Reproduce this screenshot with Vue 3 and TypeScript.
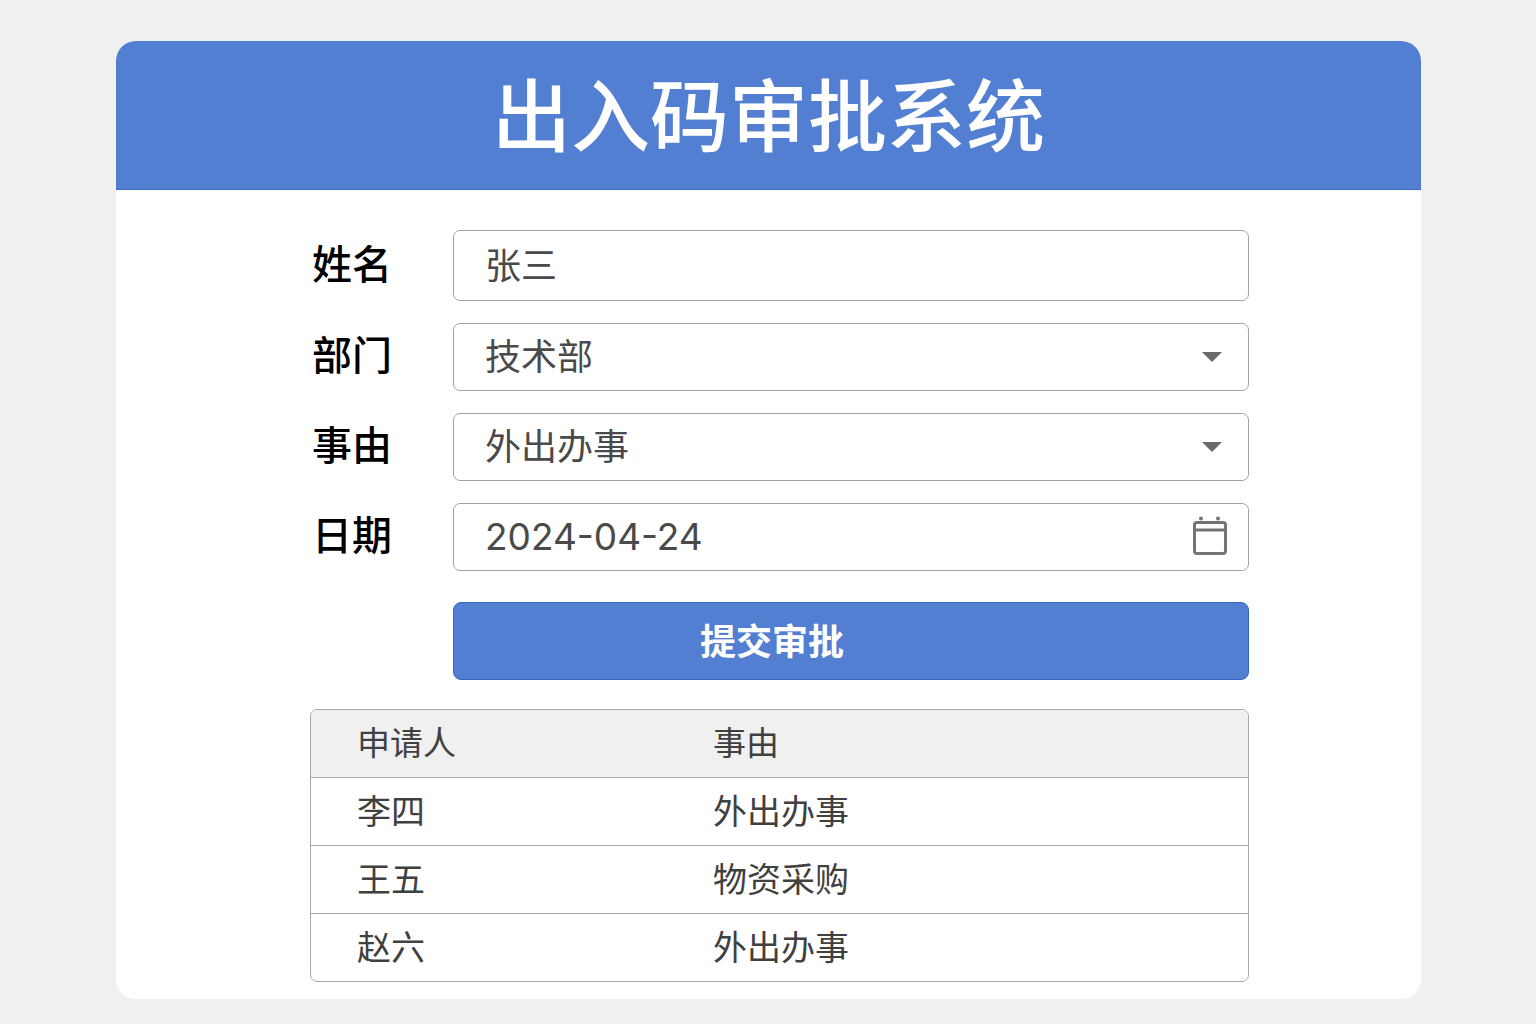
<script setup lang="ts">
import { reactive, ref } from 'vue'

interface Application {
  applicant: string
  reason: string
}

const departments: string[] = ['技术部', '人事部', '财务部']
const reasons: string[] = ['外出办事', '物资采购']

const form = reactive({
  name: '张三',
  department: '技术部',
  reason: '外出办事',
  date: '2024-04-24',
})

const applications = ref<Application[]>([
  { applicant: '李四', reason: '外出办事' },
  { applicant: '王五', reason: '物资采购' },
  { applicant: '赵六', reason: '外出办事' },
])

function submit(): void {
  applications.value.push({ applicant: form.name, reason: form.reason })
}
</script>

<template>
  <div class="page">
    <main class="card">
      <header class="card-header">
        <h1>出入码审批系统</h1>
      </header>
      <div class="card-body">
        <form class="form" @submit.prevent="submit">
          <div class="row">
            <label for="name">姓名</label>
            <div class="field">
              <input id="name" v-model="form.name" class="control tall" type="text" />
            </div>
          </div>
          <div class="row">
            <label for="department">部门</label>
            <div class="field">
              <select id="department" v-model="form.department" class="control">
                <option v-for="d in departments" :key="d">{{ d }}</option>
              </select>
              <svg class="arrow" width="20" height="10" viewBox="0 0 20 10" aria-hidden="true">
                <path d="M0 0H20L10 10Z" fill="#6b6b6b" />
              </svg>
            </div>
          </div>
          <div class="row">
            <label for="reason">事由</label>
            <div class="field">
              <select id="reason" v-model="form.reason" class="control">
                <option v-for="r in reasons" :key="r">{{ r }}</option>
              </select>
              <svg class="arrow" width="20" height="10" viewBox="0 0 20 10" aria-hidden="true">
                <path d="M0 0H20L10 10Z" fill="#6b6b6b" />
              </svg>
            </div>
          </div>
          <div class="row">
            <label for="date">日期</label>
            <div class="field">
              <input id="date" v-model="form.date" class="control date" type="text" />
              <button class="calendar" type="button" aria-label="选择日期">
                <svg width="34" height="39" viewBox="0 0 34 39" aria-hidden="true">
                  <circle cx="8" cy="2.5" r="2" fill="#747474" />
                  <circle cx="25" cy="2.5" r="2" fill="#747474" />
                  <rect x="1.5" y="6.5" width="31" height="31" rx="2.5" fill="none" stroke="#747474" stroke-width="3" />
                  <path d="M2 14H32" stroke="#747474" stroke-width="3" />
                </svg>
              </button>
            </div>
          </div>
          <button class="submit" type="submit">提交审批</button>
        </form>

        <table class="list">
          <thead>
            <tr>
              <th scope="col" class="applicant">申请人</th>
              <th scope="col">事由</th>
            </tr>
          </thead>
          <tbody>
            <tr v-for="(item, i) in applications" :key="i">
              <td>{{ item.applicant }}</td>
              <td>{{ item.reason }}</td>
            </tr>
          </tbody>
        </table>
      </div>
    </main>
  </div>
</template>

<style>
body {
  margin: 0;
  background: #eff1f1;
}
</style>

<style scoped>
.page {
  padding: 41px 115px 24px 116px;
  font-family: "Noto Sans CJK SC", sans-serif;
  color: #404040;
}

.card {
  overflow: hidden;
  border-radius: 20px;
  background: #fff;
}

.card-header {
  box-sizing: border-box;
  height: 149px;
  border-bottom: 1px solid #3c6cc4;
  background: #527fd1;
}

h1 {
  margin: 0;
  color: #fff;
  font-size: 79px;
  font-weight: 500;
  line-height: 142px;
  text-align: center;
}

.card-body {
  padding: 40px 172px 17px 194px;
}

.form {
  display: flex;
  flex-direction: column;
  gap: 22px;
}

.row {
  display: grid;
  grid-template-columns: 143px 1fr;
  align-items: center;
}

label {
  padding: 0 0 8px 2px;
  color: #000;
  font-size: 40px;
  font-weight: 500;
  line-height: 48px;
}

.field {
  position: relative;
  display: flex;
}

.control {
  box-sizing: border-box;
  width: 100%;
  height: 68px;
  margin: 0;
  padding: 0 80px 6px 31px;
  border: 1px solid #a2a2a4;
  border-radius: 7px;
  outline: none;
  appearance: none;
  background: #fff;
  color: #4a4a4a;
  font-family: inherit;
  font-size: 36px;
}

.tall {
  height: 71px;
}

.date {
  padding-bottom: 2px;
  font-family: Inter, sans-serif;
  font-size: 37px;
}

.arrow {
  position: absolute;
  top: 29px;
  right: 27px;
  pointer-events: none;
}

.calendar {
  position: absolute;
  top: 13px;
  right: 22px;
  display: flex;
  padding: 0;
  border: 0;
  background: none;
}

.submit {
  height: 78px;
  margin: 9px 0 0 143px;
  padding: 0 158px 4px 0;
  border: 1px solid #3469c0;
  border-radius: 8px;
  background: #527fd1;
  color: #fff;
  font-family: inherit;
  font-size: 36px;
  font-weight: 700;
}

.list {
  width: 100%;
  margin-top: 29px;
  overflow: hidden;
  border: 1px solid #a8a8a8;
  border-radius: 7px;
  border-spacing: 0;
  table-layout: fixed;
  font-size: 34px;
  line-height: 63px;
  text-align: left;
}

.applicant {
  width: 38%;
}

th,
td {
  box-sizing: border-box;
  padding: 0 46px 4px;
  font-weight: 400;
}

th {
  background: #f0f0f0;
  font-size: 33px;
}

td {
  border-top: 1px solid #a8a8a8;
}
</style>
